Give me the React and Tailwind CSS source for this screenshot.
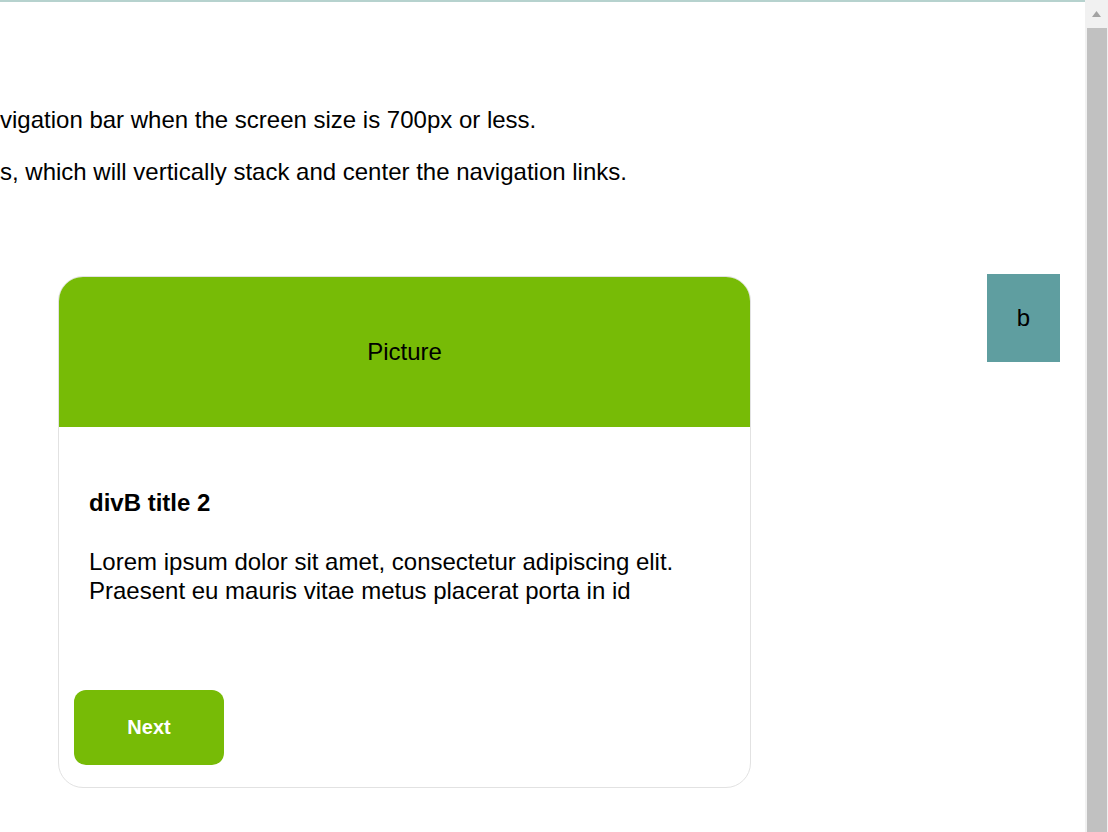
export default function App() {
  return (
    <div className="h-[832px] w-[1108px] overflow-hidden flex bg-white text-black font-['Liberation_Sans',Arial,sans-serif]">
      <div className="flex-1 flex flex-col border-t-2 border-[#b6d2ce] min-w-0">
        {/* intro text, scrolled to the side */}
        <div className="pt-[104px] text-[24px] leading-[28px] whitespace-nowrap">
          <p>vigation bar when the screen size is 700px or less.</p>
          <p className="mt-[24px]">s, which will vertically stack and center the navigation links.</p>
        </div>

        <div className="flex items-start mt-[90px]">
          {/* card */}
          <div className="ml-[58px] w-[693px] h-[512px] border border-[#e2e2e2] rounded-[25px] flex flex-col overflow-hidden">
            <div className="h-[150px] bg-[#77bb06] flex items-center justify-center text-[24px]">
              Picture
            </div>
            <div className="px-[30px] pt-[62px] flex-1">
              <h3 className="text-[24px] font-bold leading-[28px]">divB title 2</h3>
              <p className="mt-[30px] text-[24px] leading-[29px]">
                Lorem ipsum dolor sit amet, consectetur adipiscing elit.
                <br />
                Praesent eu mauris vitae metus placerat porta in id
              </p>
            </div>
            <div className="pl-[15px] pb-[22px]">
              <button className="w-[150px] h-[75px] rounded-[12px] bg-[#77bb06] text-white font-bold text-[20px] leading-[24px] pb-[2px]">
                Next
              </button>
            </div>
          </div>

          <div className="ml-[236px] -mt-[2px] w-[73px] h-[88px] bg-[#5f9ea0] flex items-center justify-center text-[24px]">
            b
          </div>
        </div>
      </div>

      {/* scrollbar */}
      <div className="w-[23px] h-full bg-[#f1f1f1] flex flex-col items-center">
        <div className="h-[28px] w-full flex items-center justify-center">
          <svg width="11" height="8" viewBox="0 0 11 8">
            <path d="M5.5 1 L10 7 L1 7 Z" fill="#a3a3a3" />
          </svg>
        </div>
        <div className="w-[20px] flex-1 bg-[#c1c1c1]" />
      </div>
    </div>
  )
}
